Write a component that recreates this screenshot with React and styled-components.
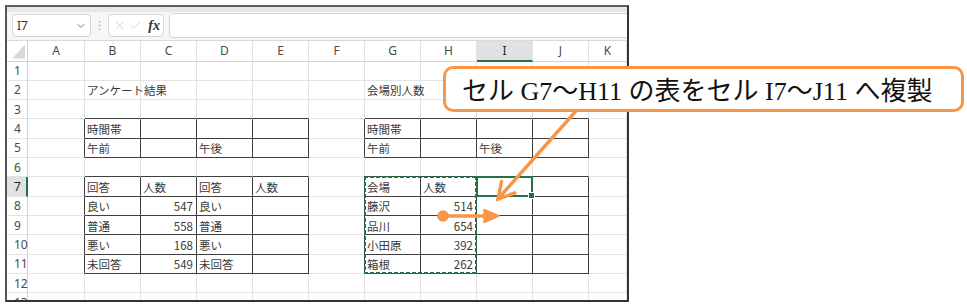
import React from "react";
import styled, { createGlobalStyle } from "styled-components";
import { X, Check, ChevronDown } from "lucide-react";

const COLS = ["A", "B", "C", "D", "E", "F", "G", "H", "I", "J", "K"];
const ROW_COUNT = 13;
const ACTIVE_ROW = 7;
const ACTIVE_COL = 8;

// bordered ranges, column index A=0
const TABLES = [
  { r1: 4, r2: 5, c1: 1, c2: 4 },
  { r1: 7, r2: 11, c1: 1, c2: 4 },
  { r1: 4, r2: 5, c1: 6, c2: 9 },
  { r1: 7, r2: 11, c1: 6, c2: 9 },
];

const DATA = {
  B2: "アンケート結果",
  G2: "会場別人数",
  B4: "時間帯",
  G4: "時間帯",
  B5: "午前",
  D5: "午後",
  G5: "午前",
  I5: "午後",
  B7: "回答",
  C7: "人数",
  D7: "回答",
  E7: "人数",
  G7: "会場",
  H7: "人数",
  B8: "良い",
  C8: 547,
  D8: "良い",
  G8: "藤沢",
  H8: 514,
  B9: "普通",
  C9: 558,
  D9: "普通",
  G9: "品川",
  H9: 654,
  B10: "悪い",
  C10: 168,
  D10: "悪い",
  G10: "小田原",
  H10: 392,
  B11: "未回答",
  C11: 549,
  D11: "未回答",
  G11: "箱根",
  H11: 262,
};

const inTable = (r, c) =>
  TABLES.some((t) => r >= t.r1 && r <= t.r2 && c >= t.c1 && c <= t.c2);

const GlobalStyle = createGlobalStyle`
  body {
    margin: 0;
    background: #fff;
  }
`;

function App() {
  const cells = [];
  for (let r = 1; r <= ROW_COUNT; r++) {
    cells.push(
      <RowHead key={"h" + r} $row={r} $active={r === ACTIVE_ROW}>
        {r}
      </RowHead>
    );
    COLS.forEach((col, c) => {
      const value = DATA[col + r];
      cells.push(
        <Cell
          key={col + r}
          $row={r}
          $col={c}
          $num={typeof value === "number"}
          $darkRight={inTable(r, c) || inTable(r, c + 1)}
          $darkBottom={inTable(r, c) || inTable(r + 1, c)}
        >
          {value}
        </Cell>
      );
    });
  }

  return (
    <Page>
      <GlobalStyle />
      <Window>
        <RibbonEdge />
        <FormulaBar>
          <NameBox>
            <span>I7</span>
            <ChevronDown size={12} strokeWidth={1.6} color="#555" />
          </NameBox>
          <Grip>⋮</Grip>
          <FxBox>
            <X size={15} strokeWidth={1.2} color="#b8b8b8" />
            <Check size={15} strokeWidth={1.2} color="#b8b8b8" />
            <Fx>fx</Fx>
          </FxBox>
          <FormulaInput />
        </FormulaBar>
        <Sheet>
          <Corner />
          {COLS.map((col, c) => (
            <ColHead key={col} $col={c} $active={c === ACTIVE_COL}>
              {col}
            </ColHead>
          ))}
          {cells}
          <Marquee />
          <Selection>
            <FillHandle />
          </Selection>
        </Sheet>
      </Window>

      <Callout>セル G7～H11 の表をセル I7～J11 へ複製</Callout>

      <Arrows width="967" height="306" viewBox="0 0 967 306">
        <g stroke="#f79646" strokeWidth="3.5" fill="none" strokeLinecap="round">
          <line x1="576" y1="111" x2="498" y2="199" />
          <polyline points="501.5,181.5 498,199 515,193" strokeLinejoin="miter" />
          <line x1="443" y1="216" x2="487" y2="216" />
        </g>
        <circle cx="443" cy="216" r="5.8" fill="#f79646" />
        <polygon points="484,209.5 499,216 484,222.5" fill="#f79646" stroke="#f79646" strokeWidth="1.5" strokeLinejoin="round" />
      </Arrows>
    </Page>
  );
}

export default App;

const Page = styled.div`
  position: relative;
  width: 967px;
  height: 306px;
  padding: 5px;
  box-sizing: border-box;
  overflow: hidden;
  background: #fff;
`;

const Window = styled.div`
  width: 624px;
  height: 297px;
  box-sizing: border-box;
  border: 2px solid #333;
  border-top-color: #5e5e5e;
  border-left-color: #555;
  display: flex;
  flex-direction: column;
  overflow: hidden;
  background: #fff;
`;

const RibbonEdge = styled.div`
  height: 5px;
  flex: none;
  background: #e7e7e7;
`;

const FormulaBar = styled.div`
  height: 29px;
  flex: none;
  display: flex;
  align-items: center;
  padding: 0 0 1px 5px;
  box-sizing: border-box;
  background: #f7f7f7;
  border-bottom: 1px solid #dadada;
`;

const NameBox = styled.div`
  width: 79px;
  height: 23px;
  box-sizing: border-box;
  display: flex;
  align-items: center;
  justify-content: space-between;
  padding: 0 3px 0 4px;
  border: 1px solid #d6d6d6;
  border-radius: 4px;
  background: #fff;
  font: 12px "Noto Sans", sans-serif;
  color: #333;
`;

const Grip = styled.span`
  width: 17px;
  text-align: center;
  font: 11px "DejaVu Sans", sans-serif;
  color: #9a9a9a;
`;

const FxBox = styled.div`
  width: 56px;
  height: 23px;
  box-sizing: border-box;
  display: flex;
  align-items: center;
  gap: 3px;
  padding: 0 3px 0 4px;
  border: 1px solid #d6d6d6;
  border-radius: 4px;
  background: #fff;
`;

const Fx = styled.span`
  margin-left: 3px;
  font: italic bold 14px "Liberation Serif", serif;
  color: #333;
`;

const FormulaInput = styled.div`
  flex: 1;
  height: 23px;
  margin: 0 -6px 0 5px;
  border: 1px solid #d6d6d6;
  border-radius: 4px;
  background: #fff;
`;

const Sheet = styled.div`
  flex: 1;
  min-height: 0;
  display: grid;
  grid-template-columns: 21px 57px repeat(9, 56px) 1fr;
  grid-template-rows: 20.5px repeat(${ROW_COUNT}, 19.33px);
  overflow: hidden;
  background: #fff;
`;

const Corner = styled.div`
  grid-row: 1;
  grid-column: 1;
  position: relative;
  border-right: 1px solid #d4d4d4;
  border-bottom: 1px solid #d4d4d4;

  &::after {
    content: "";
    position: absolute;
    right: 2px;
    bottom: 2px;
    width: 13px;
    height: 14px;
    background: #d9d9d9;
    clip-path: polygon(100% 0, 100% 100%, 0 100%);
  }
`;

const ColHead = styled.div`
  grid-row: 1;
  grid-column: ${(p) => p.$col + 2};
  display: flex;
  align-items: center;
  justify-content: center;
  font: 12px "Noto Sans", sans-serif;
  color: ${(p) => (p.$active ? "#222" : "#4a4a4a")};
  background: ${(p) => (p.$active ? "#e1e1e1" : "#fff")};
  border-right: 1px solid #e3e3e3;
  border-bottom: ${(p) => (p.$active ? "2px solid #217346" : "1px solid #d4d4d4")};
`;

const RowHead = styled.div`
  grid-row: ${(p) => p.$row + 1};
  grid-column: 1;
  display: flex;
  align-items: center;
  padding-left: 7px;
  font: 12px "Noto Sans", sans-serif;
  color: ${(p) => (p.$active ? "#222" : "#4a4a4a")};
  background: ${(p) => (p.$active ? "#e1e1e1" : "#fff")};
  border-right: ${(p) => (p.$active ? "2px solid #217346" : "1px solid #d4d4d4")};
  border-bottom: 1px solid #e3e3e3;
`;

const Cell = styled.div`
  grid-row: ${(p) => p.$row + 1};
  grid-column: ${(p) => p.$col + 2};
  display: flex;
  align-items: center;
  justify-content: ${(p) => (p.$num ? "flex-end" : "flex-start")};
  padding: 1px 3px 0 2px;
  white-space: nowrap;
  overflow: visible;
  font: 11.5px "Noto Sans CJK JP", sans-serif;
  color: #3a3a3a;
  border-right: 1px solid ${(p) => (p.$darkRight ? "#3f3f3f" : "#e3e3e3")};
  border-bottom: 1px solid ${(p) => (p.$darkBottom ? "#3f3f3f" : "#e3e3e3")};
`;

const Marquee = styled.div`
  grid-row: 8 / 13;
  grid-column: 8 / 10;
  margin: -1px 0 0 -1px;
  z-index: 2;
  pointer-events: none;
  background:
    repeating-linear-gradient(90deg, #217346 0 4px, transparent 4px 6px) top / 100% 2px no-repeat,
    repeating-linear-gradient(90deg, #217346 0 4px, transparent 4px 6px) bottom / 100% 2px no-repeat,
    repeating-linear-gradient(180deg, #217346 0 4px, transparent 4px 6px) left / 2px 100% no-repeat,
    repeating-linear-gradient(180deg, #217346 0 4px, transparent 4px 6px) right / 2px 100% no-repeat;
`;

const Selection = styled.div`
  grid-row: 8;
  grid-column: 10;
  margin: -1px 0 0 -1px;
  position: relative;
  z-index: 2;
  border: 2px solid #217346;
`;

const FillHandle = styled.div`
  position: absolute;
  right: -4px;
  bottom: -4px;
  width: 5px;
  height: 5px;
  background: #217346;
  border: 1px solid #fff;
`;

const Callout = styled.div`
  position: absolute;
  left: 443px;
  top: 66px;
  width: 521px;
  height: 46px;
  box-sizing: border-box;
  display: flex;
  align-items: center;
  padding: 0 0 1px 16px;
  border: 3px solid #f79646;
  border-radius: 10px;
  background: #fff;
  white-space: nowrap;
  font: 26px "Liberation Serif", "Noto Sans CJK JP", serif;
  color: #111;
  z-index: 3;
`;

const Arrows = styled.svg`
  position: absolute;
  left: 0;
  top: 0;
  z-index: 4;
  pointer-events: none;
`;
